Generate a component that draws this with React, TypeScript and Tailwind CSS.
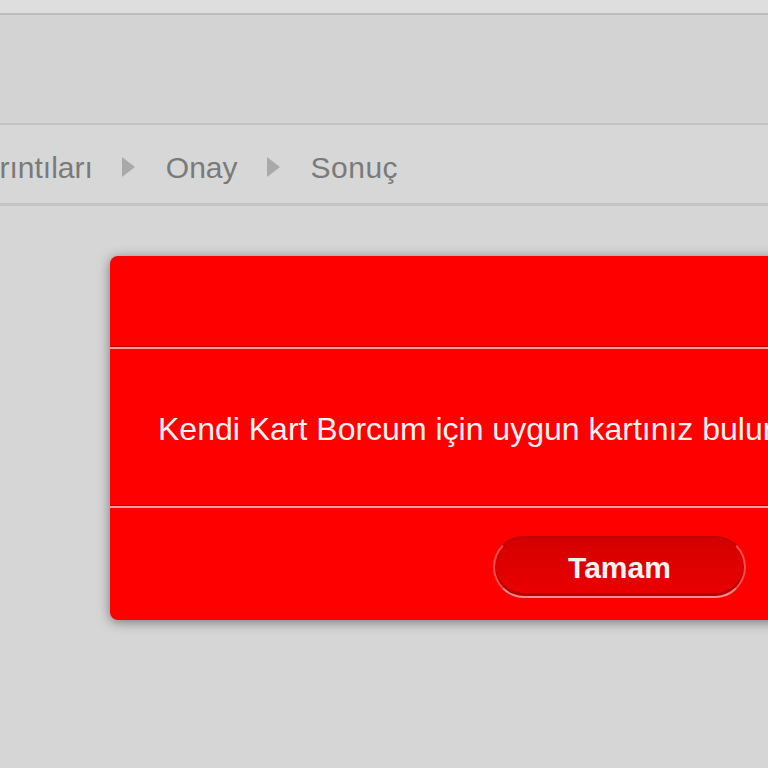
import React from "react";

function Arrow() {
  return (
    <svg width="14" height="20" viewBox="0 0 14 20" className="shrink-0">
      <polygon points="1,0 14,10 1,20" fill="#a9a9a9" />
    </svg>
  );
}

export default function App() {
  return (
    <div
      className="w-[768px] h-[768px] overflow-hidden bg-[#d6d6d6] flex flex-col"
      style={{ fontFamily: '"Liberation Sans", Arial, sans-serif' }}
    >
      <div className="h-[13px] bg-[#dedede] shrink-0" />
      <div className="h-[2px] bg-[#bdbdbd] shrink-0" />
      <div className="h-[108px] bg-[#d3d3d3] shrink-0" />
      <div className="h-[2px] bg-[#c2c2c2] shrink-0" />
      <div className="h-[78px] bg-[#d7d7d7] shrink-0 flex items-center pt-[6px] text-[30px] text-[#7a7a7a] whitespace-nowrap">
        <span className="ml-[-35px]">Ayrıntıları</span>
        <span className="ml-[28px] flex items-center"><Arrow /></span>
        <span className="ml-[31px]">Onay</span>
        <span className="ml-[28px] flex items-center"><Arrow /></span>
        <span className="ml-[31px] tracking-[0.5px]">Sonuç</span>
      </div>
      <div className="h-[3px] bg-[#c4c4c4] shrink-0" />
      <div className="pt-[50px] pl-[110px] shrink-0">
        <div className="w-[760px] h-[364px] bg-[#ff0000] rounded-[8px] shadow-[0_2px_12px_rgba(40,40,40,0.55)] flex flex-col">
          <div className="h-[90px] shrink-0" />
          <div className="h-[1px] bg-[#c80000] shrink-0" />
          <div className="h-[2px] bg-[#ff9a9a] shrink-0" />
          <div className="h-[156px] shrink-0 flex items-center pl-[48px] pt-[4px] text-[32px] text-[#fff3f3] whitespace-nowrap">
            Kendi Kart Borcum için uygun kartınız bulunmamaktadır.
          </div>
          <div className="h-[1px] bg-[#c80000] shrink-0" />
          <div className="h-[2px] bg-[#ff9a9a] shrink-0" />
          <div className="flex-1 pl-[383px] pt-[28px]">
            <button className="w-[253px] h-[62px] rounded-full border-2 border-t-[#c40000] border-x-[#f25050] border-b-[#ff8c8c] bg-gradient-to-b from-[#d40000] to-[#ea0000] shadow-[inset_0_-3px_0_rgba(150,0,0,0.6)] text-[30px] font-bold text-[#fff4f4] flex items-center justify-center">
              Tamam
            </button>
          </div>
        </div>
      </div>
    </div>
  );
}
